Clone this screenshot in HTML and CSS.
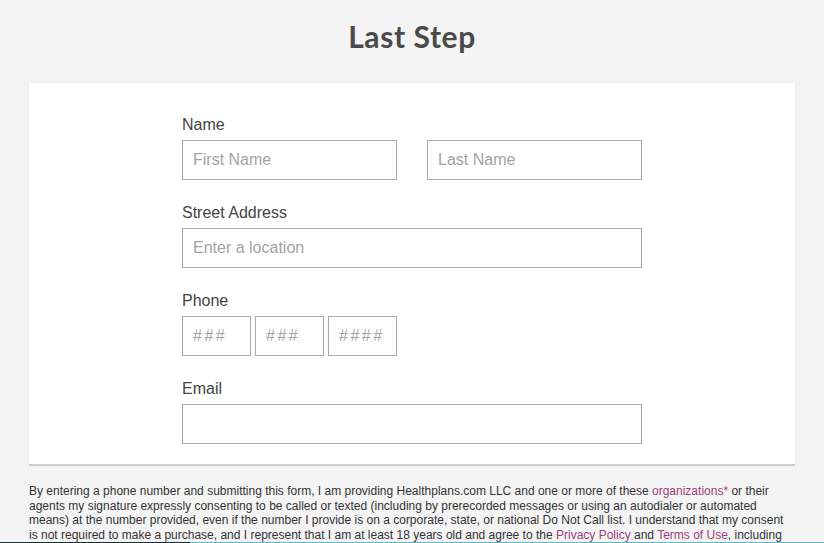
FILE: index.html
```html
<!DOCTYPE html>
<html lang="en">
<head>
<meta charset="utf-8">
<title>Last Step</title>
<link rel="stylesheet" href="styles.css">
</head>
<body>
<header class="header">
  <h1 class="title">Last Step</h1>
</header>
<main class="card">
  <form class="form">
    <div class="field">
      <label class="label">Name</label>
      <div class="row row-name">
        <input class="input" type="text" placeholder="First Name">
        <input class="input" type="text" placeholder="Last Name">
      </div>
    </div>
    <div class="field">
      <label class="label">Street Address</label>
      <input class="input" type="text" placeholder="Enter a location">
    </div>
    <div class="field">
      <label class="label">Phone</label>
      <div class="row row-phone">
        <input class="input input-phone" type="text" placeholder="###">
        <input class="input input-phone" type="text" placeholder="###">
        <input class="input input-phone" type="text" placeholder="####">
      </div>
    </div>
    <div class="field">
      <label class="label">Email</label>
      <input class="input" type="email">
    </div>
  </form>
</main>
<p class="disclaimer">By entering a phone number and submitting this form, I am providing Healthplans.com LLC and one or more of these <a class="link" href="#">organizations*</a> or their agents my signature expressly consenting to be called or texted (including by prerecorded messages or using an autodialer or automated means) at the number provided, even if the number I provide is on a corporate, state, or national Do Not Call list. I understand that my consent is not required to make a purchase, and I represent that I am at least 18 years old and agree to the <a class="link" href="#">Privacy Policy</a> and <a class="link" href="#">Terms of Use</a>, including the arbitration agreement contained therein.</p>
<div class="progress"><div class="progress-fill"></div></div>
</body>
</html>
```

FILE: styles.css
```css
html, body {
  margin: 0;
  padding: 0;
  background: #f4f4f4;
  height: 100%;
  overflow: hidden;
}

body {
  font-family: "Liberation Sans", Arial, sans-serif;
  color: #444;
}

.header {
  height: 83px;
  display: flex;
  align-items: center;
  justify-content: center;
}

.title {
  margin: 0 0 11px 0;
  font-family: Lato, "Liberation Sans", sans-serif;
  font-weight: 700;
  font-size: 30px;
  line-height: 36px;
  letter-spacing: 0.6px;
  color: #4a4a4a;
}

.card {
  margin: 0 29px;
  background: #fff;
  border-bottom: 2px solid #cfcfcf;
  box-shadow: 0 0 3px rgba(0, 0, 0, 0.06);
  padding: 31px 0 20px;
}

.form {
  width: 460px;
  margin: 0 auto;
  display: flex;
  flex-direction: column;
  gap: 22px;
}

.field {
  display: flex;
  flex-direction: column;
}

.label {
  font-size: 16px;
  line-height: 22px;
  color: #444;
  margin-bottom: 4px;
}

.row {
  display: flex;
}

.row-name {
  gap: 30px;
}

.row-name .input {
  flex: 1;
  min-width: 0;
}

.row-phone {
  gap: 4px;
}

.input {
  box-sizing: border-box;
  height: 40px;
  border: 1px solid #a9a9a9;
  border-radius: 0;
  background: #fff;
  padding: 0 10px;
  font-family: "Liberation Sans", Arial, sans-serif;
  font-size: 16px;
  color: #444;
  outline: none;
  margin: 0;
}

.input::placeholder {
  color: #a3a3a3;
}

.input-phone {
  width: 69px;
  letter-spacing: 2.5px;
}

.disclaimer {
  margin: 0;
  padding: 18px 29px 0;
  font-family: "Liberation Sans", Arial, sans-serif;
  font-size: 12px;
  line-height: 14.5px;
  color: #333;
}

.link {
  color: #9c3f7c;
  text-decoration: none;
}

.progress {
  position: fixed;
  left: 0;
  right: 0;
  bottom: 0;
  height: 1px;
  background: #5cbcbc;
}

.progress-fill {
  width: 190px;
  height: 100%;
  background: #1e2f33;
}
```
